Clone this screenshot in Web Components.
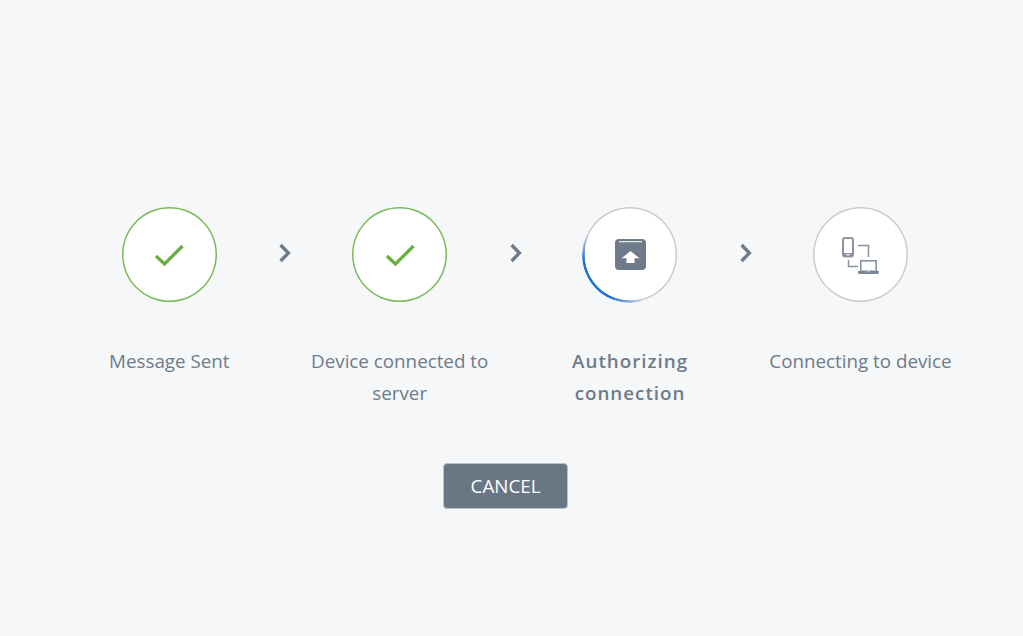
<!DOCTYPE html>
<html>
<head>
<meta charset="utf-8">
<title>Connecting</title>
<style>
  html, body { margin: 0; height: 100%; background: #f5f7f9; }
  body { font-family: "Open Sans", "Liberation Sans", sans-serif; color: #6d7b8a; }
</style>
</head>
<body>
<template id="step-tpl">
  <style>
    :host { display: flex; flex-direction: column; align-items: center; width: 190px; flex: none; }
    .circle {
      position: relative;
      width: 94.8px; height: 94.8px;
      margin-top: 0.4px;
      border-radius: 50%;
      background: #fff;
      box-shadow: inset 0 0 0 1.5px #c9cbce;
      display: flex; align-items: center; justify-content: center;
    }
    :host([state="done"]) .circle { box-shadow: inset 0 0 0 1.5px #7abb56; }
    .spin {
      position: absolute; inset: -0.6px;
      border-radius: 50%;
      display: none;
      background: conic-gradient(transparent 165deg, #1f74d2 205deg, #1f74d2 262deg, transparent 295deg, transparent);
      -webkit-mask: radial-gradient(closest-side, transparent calc(100% - 3px), #000 calc(100% - 2.4px));
      mask: radial-gradient(closest-side, transparent calc(100% - 3px), #000 calc(100% - 2.4px));
    }
    :host([state="active"]) .spin { display: block; }
    .label {
      margin-top: 42.8px;
      font-size: 18.8px;
      line-height: 32px;
      text-align: center;
      color: #6d7b8a;
    }
    :host([state="active"]) .label { font-weight: 600; letter-spacing: 1px; }
    ::slotted(svg) { display: block; position: relative; }
  </style>
  <div class="circle">
    <div class="spin"></div>
    <slot name="icon"></slot>
  </div>
  <div class="label"><slot></slot></div>
</template>

<template id="chevron-tpl">
  <style>
    :host { display: flex; justify-content: center; flex: none; width: 40.4px; height: 95px; align-items: center; }
    svg { display: block; margin: -4px 0 0 2px; }
  </style>
  <svg width="14" height="20" viewBox="0 0 14 20"><path d="M2.6 2 L10.4 10 L2.6 18" fill="none" stroke="#6d7b8a" stroke-width="3.4"/></svg>
</template>

<template id="btn-tpl">
  <style>
    :host { display: inline-block; }
    button {
      display: block; box-sizing: border-box;
      width: 124.5px; height: 46.5px;
      border: 1px solid #b9c1c9;
      border-radius: 4px;
      background: #697684;
      color: #fff;
      font: 400 18.8px "Open Sans", "Liberation Sans", sans-serif;
      padding: 0;
    }
  </style>
  <button><slot></slot></button>
</template>

<template id="screen-tpl">
  <style>
    :host { display: flex; flex-direction: column; min-height: 636px; box-sizing: border-box; padding: 207px 0 0 74.3px; }
    .row { display: flex; align-items: flex-start; }
    .foot { margin-top: 54px; padding-left: 369px; }
  </style>
  <div class="row"><slot name="steps"></slot></div>
  <div class="foot"><slot name="action"></slot></div>
</template>

<connect-screen>
  <connect-step slot="steps" state="done">
    <svg slot="icon" width="32" height="26" viewBox="0 0 32 26"><path d="M3 14 L11.5 22 L29.5 4" fill="none" stroke="#67b040" stroke-width="3.3"/></svg>
    Message Sent
  </connect-step>
  <step-chevron slot="steps"></step-chevron>
  <connect-step slot="steps" state="done">
    <svg slot="icon" width="32" height="26" viewBox="0 0 32 26"><path d="M3 14 L11.5 22 L29.5 4" fill="none" stroke="#67b040" stroke-width="3.3"/></svg>
    Device connected to server
  </connect-step>
  <step-chevron slot="steps"></step-chevron>
  <connect-step slot="steps" state="active">
    <svg slot="icon" width="31" height="31" viewBox="0 0 31 31">
      <rect width="31" height="31" rx="4" fill="#6d7b8a"/>
      <rect x="4" y="2" width="23" height="1.3" fill="#e3e6e9"/>
      <path d="M15.5 12 L24.5 19.3 H19.5 V24 H11.5 V19.3 H6.5 Z" fill="#fff"/>
    </svg>
    Authorizing connection
  </connect-step>
  <step-chevron slot="steps"></step-chevron>
  <connect-step slot="steps" state="idle">
    <svg slot="icon" width="38" height="38" viewBox="0 0 38 38" fill="none">
      <rect x="2" y="2" width="10" height="18.5" rx="2" stroke="#8a95a1" stroke-width="2"/>
      <rect x="2" y="17" width="10" height="4" fill="#8a95a1"/>
      <rect x="5.5" y="18" width="3" height="1.6" fill="#dfe3e7"/>
      <path d="M17 9.5 H27.5 V21" stroke="#8a95a1" stroke-width="1.5"/>
      <path d="M7.5 24 V30.5 H17" stroke="#8a95a1" stroke-width="1.5"/>
      <rect x="19.8" y="24.8" width="15.4" height="10.5" stroke="#8a95a1" stroke-width="1.6"/>
      <path d="M17 35 H38 V36.5 L37 38 H18 L17 36.5 Z" fill="#7b8794"/>
      <rect x="26.5" y="35.2" width="2" height="1" fill="#dfe3e7"/>
    </svg>
    Connecting to device
  </connect-step>
  <action-button slot="action">CANCEL</action-button>
</connect-screen>

<script>
  function define(name, tplId) {
    customElements.define(name, class extends HTMLElement {
      connectedCallback() {
        if (this.shadowRoot) return;
        this.attachShadow({ mode: 'open' });
        this.shadowRoot.appendChild(document.getElementById(tplId).content.cloneNode(true));
      }
    });
  }
  define('connect-step', 'step-tpl');
  define('step-chevron', 'chevron-tpl');
  define('action-button', 'btn-tpl');
  define('connect-screen', 'screen-tpl');
</script>
</body>
</html>
